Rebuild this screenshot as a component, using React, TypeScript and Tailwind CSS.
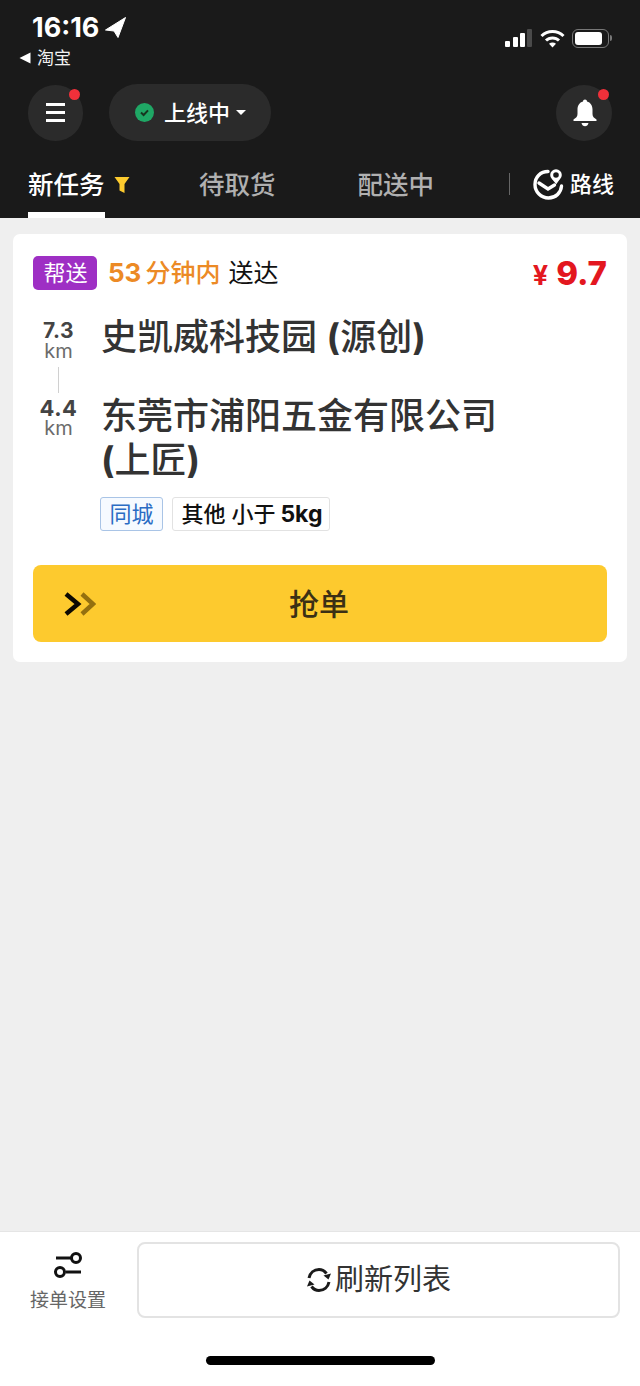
import React from "react";

const font = { fontFamily: '"Inter", "Noto Sans CJK SC", sans-serif' };

function StatusBar() {
  return (
    <div className="flex h-[76px] items-start justify-between pl-[19px] pr-[28px]">
      <div>
        <div className="flex h-[28px] items-center pl-[13px] pt-[27px]">
          <span className="text-[27px] leading-[28px] font-bold text-white">16:16</span>
          <svg width="21" height="21" viewBox="0 0 21 21" className="ml-[6px]">
            <path d="M20.5 0.5 L0.5 13 L9 14 L13 20.5 Z" fill="#fff" stroke="#fff" strokeLinejoin="round" />
          </svg>
        </div>
        <div className="mt-[21px] flex items-center gap-[6px]">
          <svg width="12" height="12" viewBox="0 0 12 12">
            <path d="M0.5 6 L11.5 0.5 V11.5 Z" fill="#fff" />
          </svg>
          <span className="text-[17px] leading-[18px] text-[#f2f2f2]">淘宝</span>
        </div>
      </div>
      <div className="mt-[28px] flex items-center gap-[7px]">
        <svg width="29" height="20" viewBox="0 0 29 20">
          <rect x="1" y="13" width="5" height="6" rx="1" fill="#fff" />
          <rect x="9" y="9" width="5" height="10" rx="1" fill="#fff" />
          <rect x="16" y="5" width="5" height="14" rx="1" fill="#fff" />
          <rect x="23" y="1" width="5" height="18" rx="1" fill="#4a4a4a" />
        </svg>
        <svg width="25" height="19" viewBox="0 0 25 19" fill="none" stroke="#fff" strokeWidth="3">
          <path d="M1.5 7 C7.5 1 17.5 1 23.5 7" />
          <path d="M6 11.5 C9.5 8 15.5 8 19 11.5" />
          <path d="M12.5 18.5 L9 14.8 C11 13 14 13 16 14.8 Z" fill="#fff" stroke="none" />
        </svg>
        <div className="flex items-center gap-[1px]">
          <div className="h-[19px] w-[37px] rounded-[6px] border border-[#777] p-[2px]">
            <div className="h-full w-[27px] rounded-[3px] bg-white" />
          </div>
          <div className="h-[6px] w-[2px] rounded-r-sm bg-[#777]" />
        </div>
      </div>
    </div>
  );
}

function RedDot({ className }: { className: string }) {
  return <span className={`absolute h-[11px] w-[11px] rounded-full bg-[#f0303a] ${className}`} />;
}

function ActionRow() {
  return (
    <div className="mt-[8px] flex h-[57px] items-center justify-between pl-[28px] pr-[28px]">
      <div className="flex items-center gap-[26px]">
        <div className="relative flex h-[56px] w-[55px] items-center justify-center rounded-full bg-[#2b2b2b]">
          <div className="flex w-[19px] flex-col gap-[5px]">
            <div className="h-[3px] bg-white" />
            <div className="h-[3px] bg-white" />
            <div className="h-[3px] bg-white" />
          </div>
          <RedDot className="right-[3px] top-[4px]" />
        </div>
        <div className="flex h-[57px] w-[162px] items-center rounded-full bg-[#2b2b2b] pl-[26px]">
          <svg width="19" height="19" viewBox="0 0 19 19">
            <circle cx="9.5" cy="9.5" r="9.5" fill="#1fa765" />
            <path d="M6 9.5 L8.6 12 L13 7.4" fill="none" stroke="#16351f" strokeWidth="2" />
          </svg>
          <span className="ml-[10px] text-[22px] leading-[28px] font-medium text-white">上线中</span>
          <svg width="10" height="5" viewBox="0 0 10 5" className="ml-[6px]">
            <path d="M0 0 H10 L5 5 Z" fill="#fff" />
          </svg>
        </div>
      </div>
      <div className="relative flex h-[56px] w-[56px] items-center justify-center rounded-full bg-[#2b2b2b] pl-[1px]">
        <svg width="24" height="28" viewBox="0 0 24 28">
          <path
            d="M12 0.5 C13.2 0.5 14 1.3 14 2.4 C17.6 3.4 19.5 6.4 19.5 10.5 V15 C19.5 17.5 21 19 23.5 20.5 V22 H0.5 V20.5 C3 19 4.5 17.5 4.5 15 V10.5 C4.5 6.4 6.4 3.4 10 2.4 C10 1.3 10.8 0.5 12 0.5 Z"
            fill="#fff"
          />
          <path d="M8.5 24 H15.5 C15 26.2 13.6 27.2 12 27.2 C10.4 27.2 9 26.2 8.5 24 Z" fill="#fff" />
        </svg>
        <RedDot className="right-[3px] top-[4px]" />
      </div>
    </div>
  );
}

function Tabs() {
  return (
    <div className="mt-[14px] flex h-[63px] items-start whitespace-nowrap pl-[28px]">
      <div className="flex w-[77px] shrink-0 flex-col self-stretch">
        <div className="flex h-[57px] items-center pt-[2px]">
          <span className="text-[25.5px] leading-[32px] font-medium text-white">新任务</span>
          <svg width="16" height="18" viewBox="0 0 16 18" className="ml-[9px] shrink-0">
            <path d="M0.5 1 H15.5 L10.5 8 V17 L5.5 14.5 V8 Z" fill="#fdcb2e" />
          </svg>
        </div>
        <div className="h-[6px] bg-white" />
      </div>
      <div className="ml-[94px] flex h-[57px] shrink-0 items-center pt-[2px] text-[25.5px] leading-[32px] font-medium text-[#b0b0b0]">待取货</div>
      <div className="ml-[82px] flex h-[57px] shrink-0 items-center pt-[2px] text-[25.5px] leading-[32px] font-medium text-[#b0b0b0]">配送中</div>
      <div className="ml-[75px] mt-[18px] h-[22px] w-[1px] shrink-0 bg-[#666]" />
      <div className="ml-[23px] flex h-[57px] shrink-0 items-center">
        <svg width="31" height="32" viewBox="0 0 31 32" fill="none" stroke="#fff" strokeWidth="3.4" strokeLinecap="round">
          <path d="M15 3.5 C7.5 3.5 2 9 2 16.5 C2 24 8 30 15.5 30 C22.5 30 28 25 28.5 18" />
          <path d="M6 15 L15 21 L21.5 17" />
          <circle cx="23" cy="7" r="4.3" strokeWidth="3" />
          <path d="M20 11 L23.2 15 L26 11" strokeWidth="1.5" fill="#fff" />
        </svg>
        <span className="ml-[6px] text-[22px] leading-[30px] font-medium text-white">路线</span>
      </div>
    </div>
  );
}

function OrderCard() {
  return (
    <div className="mx-[13px] mt-[16px] rounded-[7px] bg-white px-[20px] pb-[20px] pt-[22px]">
      <div className="flex h-[34px] items-center justify-between">
        <div className="flex items-center">
          <span className="flex h-[34px] w-[64px] items-center justify-center rounded-[5px] bg-[#9e2fc4] pl-[1px] text-[22px] leading-[28px] text-white">
            帮送
          </span>
          <span className="ml-[11px] text-[26px] leading-[30px] font-bold text-[#ec8a25]">53</span>
          <span className="ml-[4px] text-[25px] leading-[30px] font-medium text-[#ec8a25]">分钟内</span>
          <span className="ml-[8px] text-[25px] leading-[30px] text-[#111]">送达</span>
        </div>
        <div className="flex items-baseline text-[#e3171f]">
          <span className="text-[27px] leading-[30px] font-bold">¥</span>
          <span className="ml-[8px] text-[33px] leading-[34px] font-extrabold">9.7</span>
        </div>
      </div>
      <div className="mt-[25px] flex">
        <div className="flex w-[50px] shrink-0 flex-col items-center pl-[1px] pt-[5px]">
          <span className="text-[21px] leading-[22px] font-bold tracking-[0.5px] text-[#444]">7.3</span>
          <span className="text-[20px] leading-[19px] text-[#6b6b6b]">km</span>
          <div className="mt-[6px] h-[26px] w-[1px] bg-[#d0d0d0]" />
          <span className="mt-[4px] text-[22px] leading-[22px] font-bold tracking-[0.5px] text-[#444]">4.4</span>
          <span className="text-[20px] leading-[19px] text-[#6b6b6b]">km</span>
        </div>
        <div className="ml-[18px] min-w-0 flex-1">
          <div className="text-[36px] leading-[44px] font-medium text-[#333]">
            史凯威科技园 <b className="font-bold">(</b>源创<b className="font-bold">)</b>
          </div>
          <div className="mt-[35px] w-[410px] text-[36px] leading-[44px] font-medium text-[#333]">
            东莞市浦阳五金有限公司
            <br />
            <b className="font-bold">(</b>上匠<b className="font-bold">)</b>
          </div>
          <div className="-ml-[1px] mt-[15px] flex gap-[9px]">
            <span className="flex h-[34px] w-[63px] items-center justify-center rounded-[3px] border border-[#a9c4e6] bg-[#f6faff] text-[22px] leading-[28px] text-[#2b6cc4]">
              同城
            </span>
            <span className="flex h-[34px] w-[158px] items-center justify-center whitespace-nowrap rounded-[3px] border border-[#e2e2e2] pl-[2px] text-[22px] leading-[28px] font-medium text-[#111]">
              其他 小于<b className="ml-[5px] text-[23px] font-bold">5kg</b>
            </span>
          </div>
        </div>
      </div>
      <div className="relative mt-[34px] flex h-[77px] items-center justify-center rounded-[8px] bg-[#fdca2e] pr-[2px]">
        <svg width="32" height="24" viewBox="0 0 32 24" fill="none" strokeWidth="4.5" className="absolute left-[31px] top-[27px]">
          <path d="M18 2 L29 12 L18 22" stroke="#94700f" />
          <path d="M2 2 L14 12 L2 22" stroke="#0d0a02" />
        </svg>
        <span className="text-[30px] leading-[38px] font-medium text-[#3b3015]">抢单</span>
      </div>
    </div>
  );
}

function BottomBar() {
  return (
    <div className="h-[155px] border-t border-[#e5e5e5] bg-white">
      <div className="flex h-[107px] items-start pl-[30px] pr-[20px] pt-[10px]">
        <div className="flex w-[76px] flex-col items-center pt-[10px]">
          <svg width="28" height="27" viewBox="0 0 28 27" fill="none" stroke="#111" strokeWidth="3">
            <path d="M2 6 H18" />
            <circle cx="22" cy="6" r="4.5" />
            <path d="M12 20 H27" />
            <circle cx="6" cy="20" r="4.5" />
          </svg>
          <span className="mt-[10px] whitespace-nowrap text-[19px] leading-[24px] text-[#666]">接单设置</span>
        </div>
        <div className="ml-[31px] flex h-[76px] flex-1 items-center justify-center rounded-[8px] border-2 border-[#e3e3e3]">
          <svg width="26" height="26" viewBox="0 0 26 26" fill="none" stroke="#1a1a1a" strokeWidth="3">
            <path d="M3 11 C4 6 8 2.5 13 2.5 C16 2.5 18.5 3.8 20.5 6.5" />
            <path d="M23 15 C22 20 18 23.5 13 23.5 C10 23.5 7.5 22.2 5.5 19.5" />
            <path d="M25 6.5 L22.5 12.5 L17.5 8.5 Z" fill="#1a1a1a" stroke="none" />
            <path d="M1 19.5 L3.5 13.5 L8.5 17.5 Z" fill="#1a1a1a" stroke="none" />
          </svg>
          <span className="ml-[3px] text-[29px] leading-[38px] text-[#333]">刷新列表</span>
        </div>
      </div>
      <div className="mx-auto mt-[17px] h-[9px] w-[229px] rounded-full bg-black" />
    </div>
  );
}

export default function App() {
  return (
    <div style={font} className="flex h-[1386px] w-[640px] flex-col overflow-hidden bg-[#efefef]">
      <header className="h-[218px] bg-[#1a1a1a]">
        <StatusBar />
        <ActionRow />
        <Tabs />
      </header>
      <main className="flex-1">
        <OrderCard />
      </main>
      <BottomBar />
    </div>
  );
}
